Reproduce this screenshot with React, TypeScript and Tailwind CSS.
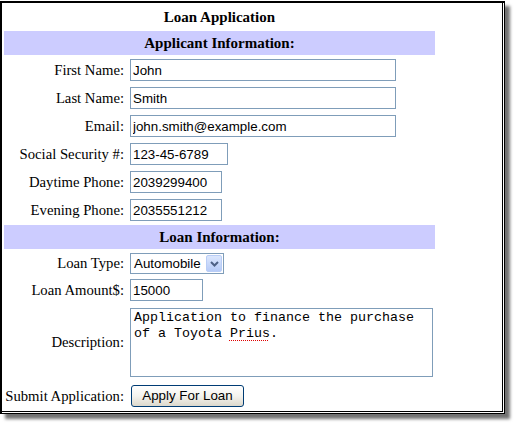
import React from 'react';

const label = "w-[120px] shrink-0 text-right text-[14.7px] leading-none text-black";
const box = "h-[22px] border border-[#7f9db9] bg-white px-[2px] text-[13.33px] text-black outline-none font-['Liberation_Sans',Arial,sans-serif]";

type RowProps = {
  readonly name: string;
  readonly children: React.ReactNode;
  readonly className?: string;
};

function Row({ name, children, className }: RowProps): JSX.Element {
  return (
    <div className={`flex items-center ${className ?? ''}`}>
      <div className={label}>{name}</div>
      <div className="ml-[6px] flex">{children}</div>
    </div>
  );
}

function Bar({ children, className }: { readonly children: React.ReactNode; readonly className?: string }): JSX.Element {
  return (
    <div className={`flex h-[24px] items-center justify-center bg-[#ccccff] text-[15px] font-bold leading-none ${className ?? ''}`}>
      {children}
    </div>
  );
}

export default function App(): JSX.Element {
  return (
    <div className="min-h-[431px] bg-white pt-[1px] font-['Liberation_Serif','Times_New_Roman',serif] text-black">
      <div className="h-[413px] w-[505px] border-b border-l-2 border-r border-t-2 border-black bg-white shadow-[5px_5px_3px_rgba(0,0,0,0.55)]">
        <div className="mb-[1px] mr-[1px] h-[409px] border-b border-r border-black pl-[2px]">
          <div className="flex w-[431px] flex-col">
            <div className="flex h-[28px] items-center justify-center text-[15px] font-bold leading-none">
              Loan Application
            </div>
            <Bar>Applicant Information:</Bar>

            <Row name="First Name:" className="mt-[4px]">
              <input readOnly defaultValue="John" className={`${box} w-[266px]`} />
            </Row>
            <Row name="Last Name:" className="mt-[6px]">
              <input readOnly defaultValue="Smith" className={`${box} w-[266px]`} />
            </Row>
            <Row name="Email:" className="mt-[6px]">
              <input readOnly defaultValue="john.smith@example.com" className={`${box} w-[266px]`} />
            </Row>
            <Row name="Social Security #:" className="mt-[6px]">
              <input readOnly defaultValue="123-45-6789" className={`${box} w-[98px]`} />
            </Row>
            <Row name="Daytime Phone:" className="mt-[6px]">
              <input readOnly defaultValue="2039299400" className={`${box} w-[92px]`} />
            </Row>
            <Row name="Evening Phone:" className="mt-[6px]">
              <input readOnly defaultValue="2035551212" className={`${box} w-[92px]`} />
            </Row>

            <Bar className="mt-[4px]">Loan Information:</Bar>

            <Row name="Loan Type:" className="mt-[4px]">
              <div className="flex h-[21px] w-[94px] items-center border border-[#7f9db9] bg-white font-['Liberation_Sans',Arial,sans-serif] text-[13.33px]">
                <span className="flex-1 pl-[3px] leading-none">Automobile</span>
                <span className="mr-[1px] flex h-[17px] w-[16px] items-center justify-center rounded-[2px] border border-[#b9cdf6] bg-linear-to-b from-[#dce7fd] to-[#b6cbf7]">
                  <svg width="9" height="6" viewBox="0 0 9 6">
                    <path d="M1 1 L4.5 4.5 L8 1" fill="none" stroke="#4d6185" strokeWidth="2" />
                  </svg>
                </span>
              </div>
            </Row>
            <Row name="Loan Amount$:" className="mt-[5px]">
              <input readOnly defaultValue="15000" className={`${box} w-[73px]`} />
            </Row>
            <Row name="Description:" className="mt-[7px]">
              <div className="h-[69px] w-[303px] border border-[#7f9db9] bg-white px-[3px] pt-[1px] font-['Liberation_Mono','Courier_New',monospace] text-[13.33px] leading-[16px]">
                Application to finance the purchase of a Toyota{' '}
                <span className="underline decoration-[#e00000] decoration-dotted decoration-1 underline-offset-[3px]">Prius</span>.
              </div>
            </Row>
            <Row name="Submit Application:" className="mt-[8px]">
              <button
                type="button"
                className="ml-[1px] h-[22px] w-[113px] rounded-[3px] border border-[#003c74] bg-linear-to-b from-white via-[#f4f3ee] to-[#dcd8cc] font-['Liberation_Sans',Arial,sans-serif] text-[13.33px] leading-none text-black"
              >
                Apply For Loan
              </button>
            </Row>
          </div>
        </div>
      </div>
    </div>
  );
}
